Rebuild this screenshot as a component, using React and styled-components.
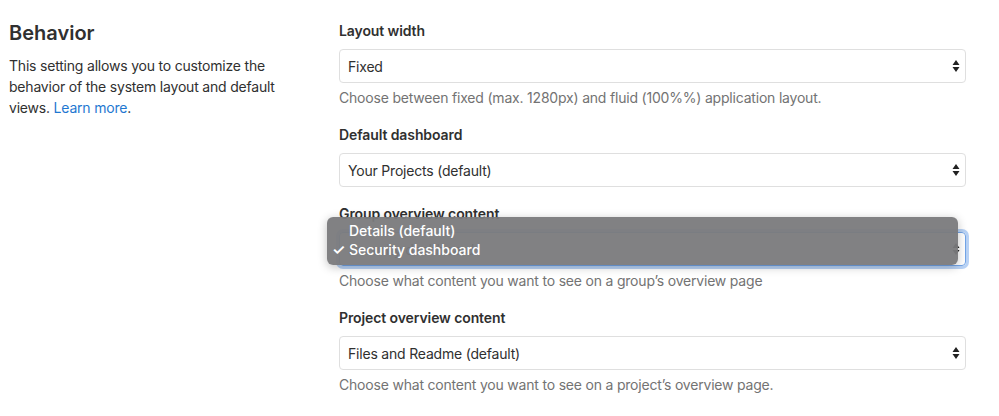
import React from 'react';
import styled, { createGlobalStyle } from 'styled-components';

const GlobalStyle = createGlobalStyle`
  body {
    margin: 0;
    background: #fff;
    font-family: Inter, "Liberation Sans", sans-serif;
    color: #303030;
  }
`;

const Page = styled.div`
  display: flex;
  padding: 21px 33px 0 9px;
`;

const Aside = styled.div`
  width: 330px;
  flex: none;
`;

const Heading = styled.h4`
  margin: 0 0 10px;
  font-size: 20px;
  line-height: 24px;
  font-weight: 600;
  color: #303030;
`;

const Intro = styled.p`
  margin: 0;
  width: 272px;
  font-size: 14px;
  line-height: 21px;
  letter-spacing: -0.2px;
  color: #303030;
`;

const Link = styled.a`
  color: #1f78d1;
  text-decoration: none;
`;

const Main = styled.div`
  flex: 1;
`;

const Group = styled.div`
  position: relative;
  margin-bottom: 17px;
`;

const Label = styled.label`
  display: block;
  margin-bottom: 8px;
  font-size: 14px;
  line-height: 20px;
  font-weight: 600;
  letter-spacing: -0.1px;
  color: #303030;
`;

const Select = styled.div`
  display: flex;
  align-items: center;
  justify-content: space-between;
  height: 34px;
  box-sizing: border-box;
  padding: 0 5px 0 8px;
  border: 1px solid ${p => (p.focused ? '#73a5e8' : '#dfdfdf')};
  border-radius: 4px;
  box-shadow: ${p => (p.focused ? '0 0 0 3px rgba(97, 155, 232, 0.45)' : 'none')};
  font-size: 14px;
  letter-spacing: -0.2px;
  color: #303030;
`;

const Help = styled.p`
  margin: 5px 0 0;
  font-size: 14px;
  line-height: 20px;
  letter-spacing: -0.2px;
  color: #737373;
`;

const Menu = styled.div`
  position: absolute;
  top: 13px;
  left: -12px;
  width: 631px;
  height: 48px;
  box-sizing: border-box;
  padding: 4px 0;
  background: rgba(122, 122, 124, 0.95);
  border-radius: 6px;
  box-shadow: 0 2px 10px rgba(0, 0, 0, 0.25);
`;

const Option = styled.div`
  display: flex;
  align-items: center;
  height: 19px;
  font-size: 14px;
  font-weight: 500;
  color: #fff;
`;

const Check = styled.span`
  width: 22px;
  padding-left: 5px;
  box-sizing: border-box;
  font-size: 15px;
  font-weight: 600;
`;

const Arrows = () => (
  <svg width="8" height="14" viewBox="0 0 8 14">
    <path d="M4 1 L7.5 6 L0.5 6 Z M4 13 L7.5 8 L0.5 8 Z" fill="#222" />
  </svg>
);

const Field = ({ label, value, help, focused, children }) => (
  <Group>
    <Label>{label}</Label>
    <Select focused={focused}>
      <span>{value}</span>
      <Arrows />
    </Select>
    {help && <Help>{help}</Help>}
    {children}
  </Group>
);

export default function App() {
  return (
    <>
      <GlobalStyle />
      <Page>
        <Aside>
          <Heading>Behavior</Heading>
          <Intro>
            This setting allows you to customize the behavior of the system layout and default
            views. <Link href="#">Learn more</Link>.
          </Intro>
        </Aside>
        <Main>
          <Field
            label="Layout width"
            value="Fixed"
            help="Choose between fixed (max. 1280px) and fluid (100%%) application layout."
          />
          <Field label="Default dashboard" value="Your Projects (default)" />
          <Field
            label="Group overview content"
            value="Security dashboard"
            focused
            help="Choose what content you want to see on a group’s overview page"
          >
            <Menu>
              <Option>
                <Check />
                Details (default)
              </Option>
              <Option>
                <Check>✓</Check>
                Security dashboard
              </Option>
            </Menu>
          </Field>
          <Field
            label="Project overview content"
            value="Files and Readme (default)"
            help="Choose what content you want to see on a project’s overview page."
          />
        </Main>
      </Page>
    </>
  );
}
